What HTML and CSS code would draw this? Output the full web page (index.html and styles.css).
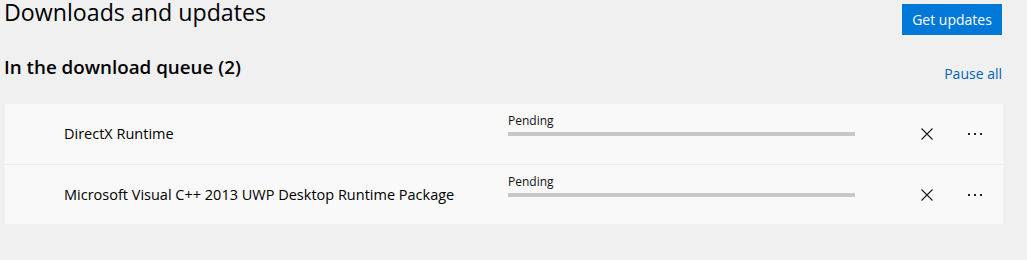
FILE: index.html
```html
<!DOCTYPE html>
<html lang="en">
<head>
<meta charset="utf-8">
<title>Downloads and updates</title>
<link rel="stylesheet" href="styles.css">
</head>
<body>
<main class="page">
  <header class="page-header">
    <h1 class="page-title">Downloads and updates</h1>
    <button class="primary-btn" type="button">Get updates</button>
  </header>
  <div class="section-header">
    <h2 class="section-title">In the download queue (2)</h2>
    <a class="link" href="#">Pause all</a>
  </div>
  <section class="queue">
    <div class="queue-row">
      <div class="item-name">DirectX Runtime</div>
      <div class="progress">
        <div class="progress-label">Pending</div>
        <div class="progress-track"></div>
      </div>
      <button class="icon-btn" type="button" aria-label="Cancel">
        <svg width="12" height="12" viewBox="0 0 12 12"><path d="M0.5 0.5 L11.5 11.5 M11.5 0.5 L0.5 11.5" stroke="#1a1a1a" stroke-width="1.1" fill="none"/></svg>
      </button>
      <button class="icon-btn" type="button" aria-label="More">
        <svg width="14" height="2" viewBox="0 0 14 2"><rect x="0" y="0" width="2" height="2" fill="#222"/><rect x="6" y="0" width="2" height="2" fill="#222"/><rect x="12" y="0" width="2" height="2" fill="#222"/></svg>
      </button>
    </div>
    <div class="queue-row">
      <div class="item-name">Microsoft Visual C++ 2013 UWP Desktop Runtime Package</div>
      <div class="progress">
        <div class="progress-label">Pending</div>
        <div class="progress-track"></div>
      </div>
      <button class="icon-btn" type="button" aria-label="Cancel">
        <svg width="12" height="12" viewBox="0 0 12 12"><path d="M0.5 0.5 L11.5 11.5 M11.5 0.5 L0.5 11.5" stroke="#1a1a1a" stroke-width="1.1" fill="none"/></svg>
      </button>
      <button class="icon-btn" type="button" aria-label="More">
        <svg width="14" height="2" viewBox="0 0 14 2"><rect x="0" y="0" width="2" height="2" fill="#222"/><rect x="6" y="0" width="2" height="2" fill="#222"/><rect x="12" y="0" width="2" height="2" fill="#222"/></svg>
      </button>
    </div>
  </section>
</main>
</body>
</html>
```
FILE: styles.css
```css
* { box-sizing: border-box; }
html, body { margin: 0; padding: 0; }
body {
  background: #f0f0f0;
  font-family: "Open Sans", "Noto Sans", "Liberation Sans", sans-serif;
  color: #000;
  width: 1027px;
  height: 260px;
  overflow: hidden;
}
.page {
  padding: 0 24px 0 4px;
}
.page-header {
  display: flex;
  justify-content: space-between;
  align-items: flex-start;
  height: 35px;
}
.page-title {
  margin: 0;
  font-size: 23.2px;
  font-weight: 400;
  line-height: 24px;
}
.primary-btn {
  margin: 4px 1px 0 0;
  width: 100px;
  height: 31px;
  border: 0;
  padding: 0;
  background: #0078d7;
  color: #fff;
  font-family: inherit;
  font-size: 14px;
  line-height: 31px;
}
.section-header {
  display: flex;
  justify-content: space-between;
  align-items: flex-start;
  margin-top: 20px;
  height: 29px;
}
.section-title {
  margin: 0;
  font-size: 18.8px;
  font-weight: 600;
  line-height: 24px;
}
.link {
  margin: 9px 1px 0 0;
  color: #0063b1;
  text-decoration: none;
  font-size: 14px;
  line-height: 20px;
}
.queue {
  margin: 20px 0 0 1px;
  background: #f9f9f9;
}
.queue-row {
  display: grid;
  grid-template-columns: 1fr 395px 48px 48px;
  align-items: center;
  height: 60px;
  padding: 0 4px 0 59px;
}
.queue-row + .queue-row {
  border-top: 1px solid #ececec;
}
.item-name {
  font-size: 14.5px;
  line-height: 20px;
}
.progress {
  align-self: start;
  padding-top: 10px;
  width: 347px;
}
.progress-label {
  font-size: 12px;
  line-height: 14px;
  color: #111;
}
.progress-track {
  margin-top: 4px;
  height: 4px;
  background: #c8c8c8;
}
.icon-btn {
  border: 0;
  padding: 0;
  background: transparent;
  width: 48px;
  height: 60px;
  display: flex;
  align-items: center;
  justify-content: center;
}
```
